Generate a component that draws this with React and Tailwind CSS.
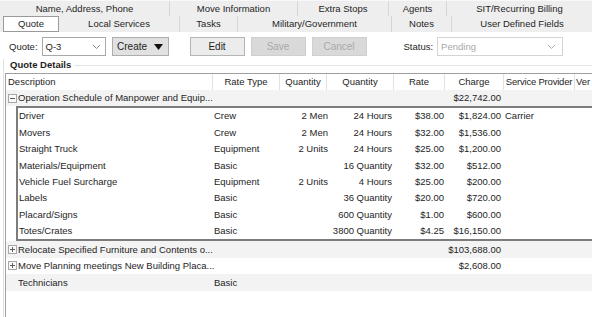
import React from "react";

const Chevron = ({ color = "#8a8a8a" }) => (
  <svg width="9" height="6" viewBox="0 0 9 6" className="shrink-0">
    <path d="M1 1 L4.5 4.5 L8 1" fill="none" stroke={color} strokeWidth="1" />
  </svg>
);

const Box = ({ plus }) => (
  <svg width="9" height="9" viewBox="0 0 9 9" className="shrink-0">
    <rect x="0.5" y="0.5" width="8" height="8" fill="#fafafa" stroke="#a8a8a8" />
    <path d="M2 4.5 H7" stroke="#606060" strokeWidth="1" />
    {plus && <path d="M4.5 2 V7" stroke="#606060" strokeWidth="1" />}
  </svg>
);

const rows = [
  ["Driver", "Crew", "2 Men", "24 Hours", "$38.00", "$1,824.00", "Carrier"],
  ["Movers", "Crew", "2 Men", "24 Hours", "$32.00", "$1,536.00", ""],
  ["Straight Truck", "Equipment", "2 Units", "24 Hours", "$25.00", "$1,200.00", ""],
  ["Materials/Equipment", "Basic", "", "16 Quantity", "$32.00", "$512.00", ""],
  ["Vehicle Fuel Surcharge", "Equipment", "2 Units", "4 Hours", "$25.00", "$200.00", ""],
  ["Labels", "Basic", "", "36 Quantity", "$20.00", "$720.00", ""],
  ["Placard/Signs", "Basic", "", "600 Quantity", "$1.00", "$600.00", ""],
  ["Totes/Crates", "Basic", "", "3800 Quantity", "$4.25", "$16,150.00", ""],
];

export default function App() {
  return (
    <div
      className="w-[592px] h-[317px] overflow-hidden bg-white text-[9.5px] leading-none text-[#1e1e1e] flex flex-col whitespace-nowrap"
      style={{ fontFamily: '"Liberation Sans", Arial, sans-serif' }}
    >
      {/* tab row 1 */}
      <div className="h-[16px] flex bg-[#eeeeee] border-t border-[#f8f8f8] shrink-0">
        <div className="w-[170px] flex items-center justify-center border-r border-[#d6d6d6]">Name, Address, Phone</div>
        <div className="w-[128px] flex items-center justify-center border-r border-[#d6d6d6]">Move Information</div>
        <div className="w-[91px] flex items-center justify-center border-r border-[#d6d6d6]">Extra Stops</div>
        <div className="w-[58px] flex items-center justify-center border-r border-[#d6d6d6]">Agents</div>
        <div className="flex-1 flex items-center justify-center">SIT/Recurring Billing</div>
      </div>
      {/* tab row 2 */}
      <div className="h-[16px] flex bg-[#eeeeee] pl-[3px] shrink-0">
        <div className="w-[56px] flex items-center justify-center bg-white border border-[#9a9a9a]">Quote</div>
        <div className="w-[121px] flex items-center justify-center border-r border-[#d6d6d6]">Local Services</div>
        <div className="w-[58px] flex items-center justify-center border-r border-[#d6d6d6]">Tasks</div>
        <div className="w-[154px] flex items-center justify-center border-r border-[#d6d6d6]">Military/Government</div>
        <div className="w-[60px] flex items-center justify-center border-r border-[#d6d6d6]">Notes</div>
        <div className="flex-1 flex items-center justify-center">User Defined Fields</div>
      </div>
      {/* toolbar */}
      <div className="h-[19px] mt-[5px] flex items-center shrink-0">
        <span className="ml-[9px] mr-[4px]">Quote:</span>
        <div className="w-[64px] h-[19px] border border-[#a8a8a8] bg-white flex items-center justify-between pl-[3px] pr-[4px]">
          <span>Q-3</span>
          <Chevron />
        </div>
        <div className="ml-[6px] w-[57px] h-[19px] border border-[#adadad] bg-[#e1e1e1] flex items-center justify-center gap-[7px]">
          <span className="text-[10px]">Create</span>
          <svg width="9" height="6" viewBox="0 0 9 6"><path d="M0 0 H9 L4.5 6 Z" fill="#111" /></svg>
        </div>
        <div className="ml-[21px] w-[55px] h-[19px] border border-[#b4b4b4] bg-[#ececec] flex items-center justify-center text-[10px]">Edit</div>
        <div className="ml-[6px] w-[55px] h-[19px] border border-[#cfcfcf] bg-[#d9d9d9] flex items-center justify-center text-[10px] text-[#a9a9a9]">Save</div>
        <div className="ml-[6px] w-[55px] h-[19px] border border-[#cfcfcf] bg-[#d9d9d9] flex items-center justify-center text-[10px] text-[#a9a9a9]">Cancel</div>
        <span className="ml-[37px] mr-[4px]">Status:</span>
        <div className="w-[126px] h-[19px] border border-[#d4d4d4] bg-white flex items-center justify-between pl-[3px] pr-[6px] text-[#a8a8a8]">
          <span>Pending</span>
          <Chevron color="#b0b0b0" />
        </div>
      </div>
      {/* group */}
      <div className="mt-[3px] flex-1 flex flex-col ml-[3px] border-l border-[#e0e0e0] min-h-0">
        <div className="h-[11px] flex items-center shrink-0">
          <span className="ml-[6px] font-bold pr-[3px]">Quote Details</span>
          <div className="flex-1 h-px bg-[#e3e3e3] mt-[1px]" />
        </div>
        <div className="mt-[3px] ml-[1px] flex-1 border-l border-t border-[#a0a0a0] flex flex-col">
          {/* header */}
          <div className="h-[16px] flex shrink-0 bg-white">
            <div className="w-[207px] pl-[2px] flex items-center border-r border-[#e2e2e2]">Description</div>
            <div className="w-[67px] flex items-center justify-center border-r border-[#e2e2e2]">Rate Type</div>
            <div className="w-[47px] flex items-center justify-center border-r border-[#e2e2e2]">Quantity</div>
            <div className="w-[67px] flex items-center justify-center border-r border-[#e2e2e2]">Quantity</div>
            <div className="w-[51px] flex items-center justify-center border-r border-[#e2e2e2]">Rate</div>
            <div className="w-[59px] flex items-center justify-center border-r border-[#e2e2e2]">Charge</div>
            <div className="w-[71px] flex items-center justify-center border-r border-[#e2e2e2] tracking-[-0.2px]">Service Provider</div>
            <div className="flex-1 pl-[1px] flex items-center">Ver</div>
          </div>
          {/* group row */}
          <div className="h-[16px] flex items-center bg-[#f3f3f3] shrink-0">
            <div className="w-[11px] pl-[2px] flex"><Box /></div>
            <div className="w-[431px] pl-[1px]">Operation Schedule of Manpower and Equip...</div>
            <div className="w-[53px] text-right">$22,742.00</div>
          </div>
          {/* nested */}
          <div className="ml-[10px] border-t-2 border-b-2 border-l-2 border-[#7c7c7c] flex flex-col shrink-0">
            {rows.map((r) => (
              <div key={r[0]} className="h-[16.4px] flex items-center bg-white">
                <div className="w-[195px] pl-[1px]">{r[0]}</div>
                <div className="w-[67px] pl-[1px]">{r[1]}</div>
                <div className="w-[48px] text-right">{r[2]}</div>
                <div className="w-[64px] text-right">{r[3]}</div>
                <div className="w-[52px] text-right">{r[4]}</div>
                <div className="w-[57px] text-right">{r[5]}</div>
                <div className="pl-[4px]">{r[6]}</div>
              </div>
            ))}
          </div>
          <div className="h-[16.5px] flex items-center bg-[#f3f3f3] shrink-0">
            <div className="w-[11px] pl-[2px] flex"><Box plus /></div>
            <div className="w-[431px] pl-[1px]">Relocate Specified Furniture and Contents o...</div>
            <div className="w-[53px] text-right">$103,688.00</div>
          </div>
          <div className="h-[16.5px] flex items-center bg-white shrink-0">
            <div className="w-[11px] pl-[2px] flex"><Box plus /></div>
            <div className="w-[431px] pl-[1px]">Move Planning meetings New Building Placa...</div>
            <div className="w-[53px] text-right">$2,608.00</div>
          </div>
          <div className="h-[16.5px] flex items-center bg-[#f3f3f3] shrink-0">
            <div className="w-[207px] pl-[12px]">Technicians</div>
            <div className="pl-[1px]">Basic</div>
          </div>
        </div>
      </div>
    </div>
  );
}
